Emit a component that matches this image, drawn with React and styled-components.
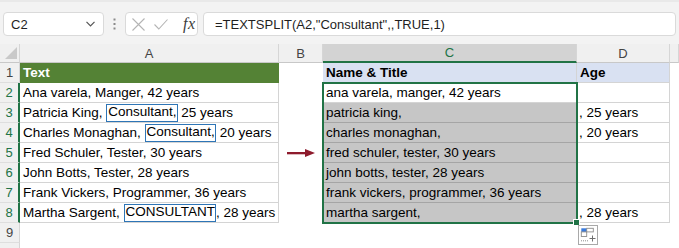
import React from 'react';
import styled, { createGlobalStyle } from 'styled-components';

const GlobalStyle = createGlobalStyle`
  html, body {
    margin: 0;
    padding: 0;
    width: 679px;
    height: 248px;
    overflow: hidden;
    background: #ffffff;
    font-family: 'Liberation Sans', Arial, sans-serif;
  }
`;

const GREEN = '#217346';

const Toolbar = styled.div`
  display: flex;
  align-items: center;
  height: 44px;
  box-sizing: border-box;
  padding: 10px 3px 8px 3px;
  background: #f3f3f3;
  border-top: 2px solid #e9e9e9;
`;

const Box = styled.div`
  display: flex;
  align-items: center;
  height: 24px;
  box-sizing: border-box;
  background: #ffffff;
  border: 1px solid #dadada;
  border-radius: 4px;
  font-size: 13px;
  color: #1f1f1f;
`;

const NameBox = styled(Box)`
  width: 101px;
  justify-content: space-between;
  padding: 0 8px 0 7px;
`;

const Grip = styled.div`
  width: 21px;
  display: flex;
  justify-content: center;
`;

const ButtonGroup = styled(Box)`
  width: 73px;
  padding-left: 6px;
  gap: 9px;
`;

const Fx = styled.span`
  margin-left: 6px;
  font-family: 'Liberation Serif', 'Times New Roman', serif;
  font-style: italic;
  font-size: 16px;
  color: #3c3c3c;
  letter-spacing: 0.5px;
`;

const FormulaBox = styled(Box)`
  flex: 1;
  margin-left: 5px;
  padding-left: 11px;
  white-space: pre;
`;

const Sheet = styled.div`
  position: relative;
  display: grid;
  grid-template-columns: 20px 259px 44px 254px 93px 9px;
  grid-template-rows: 19px repeat(10, 20px);
`;

const Corner = styled.div`
  background: #f0f0f0;
  border-right: 1px solid #d6d6d6;
  border-bottom: 1px solid #c8c8c8;
  display: flex;
  align-items: flex-end;
  justify-content: flex-end;
  padding: 0 2px 3px 0;
`;

const ColHead = styled.div`
  display: flex;
  align-items: center;
  justify-content: center;
  box-sizing: border-box;
  font-size: 13px;
  background: ${(p) => (p.$sel ? '#d3d3d3' : '#f0f0f0')};
  color: ${(p) => (p.$sel ? GREEN : '#444444')};
  border-right: 1px solid #d6d6d6;
  border-bottom: ${(p) => (p.$sel ? `2px solid ${GREEN}` : '1px solid #c8c8c8')};
`;

const RowHead = styled.div`
  display: flex;
  align-items: center;
  justify-content: center;
  box-sizing: border-box;
  font-size: 13px;
  background: #f0f0f0;
  color: ${(p) => (p.$sel ? GREEN : '#444444')};
  border-bottom: 1px solid #dedede;
  border-right: ${(p) => (p.$sel ? `2px solid ${GREEN}` : '1px solid #d6d6d6')};
`;

const Cell = styled.div`
  display: flex;
  align-items: flex-end;
  box-sizing: border-box;
  padding: 0 0 1px ${(p) => p.$pad ?? 3}px;
  font-size: 13.5px;
  line-height: 16px;
  white-space: pre;
  overflow: hidden;
  background: ${(p) => p.$fill || '#ffffff'};
  color: ${(p) => p.$color || '#000000'};
  font-weight: ${(p) => (p.$bold ? 700 : 400)};
  border-right: ${(p) => (p.$line ? `1px solid ${p.$line}` : 'none')};
  border-bottom: ${(p) => (p.$line ? `1px solid ${p.$line}` : 'none')};
`;

const ArrowCell = styled(Cell)`
  align-items: center;
  justify-content: center;
  padding: 0;
`;

const Marked = styled.span`
  display: inline-flex;
  align-items: flex-end;
  align-self: stretch;
  margin-top: 1px;
  margin-bottom: -1px;
  padding: 0 0 1px 1px;
  border: 1px solid #2e75b6;
  box-sizing: border-box;
`;

const Selection = styled.div`
  position: absolute;
  left: 322px;
  top: 38px;
  width: 256px;
  height: 142px;
  box-sizing: border-box;
  border: 2px solid ${GREEN};
  pointer-events: none;
`;

const FillHandle = styled.div`
  position: absolute;
  left: 573px;
  top: 175px;
  width: 7px;
  height: 7px;
  box-sizing: border-box;
  background: ${GREEN};
  border: 1px solid #ffffff;
`;

const QuickAnalysis = styled.div`
  position: absolute;
  left: 578px;
  top: 181px;
  width: 20px;
  height: 20px;
  box-sizing: border-box;
  background: #ffffff;
  border: 1px solid #a9a9a9;
  display: flex;
`;

const rows = [
  { a: ['Ana varela, Manger, 42 years'], c: 'ana varela, manger, 42 years', d: '' },
  { a: ['Patricia King, ', 'Consultant,', ' 25 years'], c: 'patricia king,', d: ', 25 years' },
  { a: ['Charles Monaghan, ', 'Consultant,', ' 20 years'], c: 'charles monaghan,', d: ', 20 years' },
  { a: ['Fred Schuler, Tester, 30 years'], c: 'fred schuler, tester, 30 years', d: '' },
  { a: ['John Botts, Tester, 28 years'], c: 'john botts, tester, 28 years', d: '' },
  { a: ['Frank Vickers, Programmer, 36 years'], c: 'frank vickers, programmer, 36 years', d: '' },
  { a: ['Martha Sargent, ', 'CONSULTANT', ', 28 years'], c: 'martha sargent,', d: ', 28 years' },
];

const LINE = '#d4d4d4';

function Chevron() {
  return (
    <svg width="9" height="6" viewBox="0 0 9 6">
      <path d="M0.5 0.8 L4.5 4.8 L8.5 0.8" fill="none" stroke="#555" strokeWidth="1.2" />
    </svg>
  );
}

function Dots() {
  return (
    <svg width="3" height="12" viewBox="0 0 3 12">
      <rect x="0.5" y="0.5" width="2" height="2" fill="#8a8a8a" />
      <rect x="0.5" y="5" width="2" height="2" fill="#8a8a8a" />
      <rect x="0.5" y="9.5" width="2" height="2" fill="#8a8a8a" />
    </svg>
  );
}

function Cross() {
  return (
    <svg width="13" height="13" viewBox="0 0 13 13">
      <path d="M0.5 0.5 L12.5 12.5 M12.5 0.5 L0.5 12.5" stroke="#b4b4b4" strokeWidth="1.1" fill="none" />
    </svg>
  );
}

function Check() {
  return (
    <svg width="14" height="11" viewBox="0 0 14 11">
      <path d="M0.5 5.5 L4.8 10 L13.5 0.5" stroke="#b4b4b4" strokeWidth="1.1" fill="none" />
    </svg>
  );
}

function CornerMark() {
  return (
    <svg width="12" height="12" viewBox="0 0 12 12">
      <path d="M12 0 L12 12 L0 12 Z" fill="#c9c9c9" />
    </svg>
  );
}

function RedArrow() {
  return (
    <svg width="28" height="8" viewBox="0 0 28 8">
      <rect x="0" y="3" width="20" height="2.3" fill="#8e1b2d" />
      <path d="M18 0 L28 4.1 L18 8 Z" fill="#8e1b2d" />
    </svg>
  );
}

function QuickIcon() {
  return (
    <svg width="18" height="18" viewBox="0 0 18 18">
      <rect x="2.3" y="2.3" width="5.4" height="3.6" fill="#3b7bdc" />
      <rect x="7.7" y="2.3" width="6.6" height="3.6" fill="none" stroke="#8c8c8c" strokeWidth="0.9" />
      <rect x="2.3" y="5.9" width="5.4" height="4.6" fill="none" stroke="#8c8c8c" strokeWidth="0.9" />
      <path d="M2 14.8 H10" stroke="#8c8c8c" strokeWidth="1" strokeDasharray="1 1" />
      <path d="M13.5 9.5 V15.5 M10.5 12.5 H16.5" stroke="#6f6f6f" strokeWidth="1" />
    </svg>
  );
}

export default function App() {
  return (
    <>
      <GlobalStyle />
      <Toolbar>
        <NameBox>
          <span>C2</span>
          <Chevron />
        </NameBox>
        <Grip>
          <Dots />
        </Grip>
        <ButtonGroup>
          <Cross />
          <Check />
          <Fx>fx</Fx>
        </ButtonGroup>
        <FormulaBox>=TEXTSPLIT(A2,"Consultant",,TRUE,1)</FormulaBox>
      </Toolbar>
      <Sheet>
        <Corner>
          <CornerMark />
        </Corner>
        <ColHead>A</ColHead>
        <ColHead>B</ColHead>
        <ColHead $sel>C</ColHead>
        <ColHead>D</ColHead>
        <ColHead />

        <RowHead>1</RowHead>
        <Cell $fill="#548235" $color="#ffffff" $bold $line="#548235">Text</Cell>
        <Cell />
        <Cell $fill="#d9e1f2" $bold $line={LINE}>Name &amp; Title</Cell>
        <Cell $fill="#d9e1f2" $bold $line={LINE}>Age</Cell>
        <Cell />

        {rows.map((r, i) => {
          const shaded = i > 0;
          return (
            <React.Fragment key={i}>
              <RowHead $sel>{i + 2}</RowHead>
              <Cell $line={LINE}>
                {r.a.length === 1 ? (
                  r.a[0]
                ) : (
                  <>
                    {r.a[0]}
                    <Marked>{r.a[1]}</Marked>
                    {r.a[2]}
                  </>
                )}
              </Cell>
              {i === 3 ? (
                <ArrowCell>
                  <RedArrow />
                </ArrowCell>
              ) : (
                <Cell />
              )}
              <Cell $fill={shaded ? '#c6c6c6' : '#ffffff'} $line={shaded ? '#a5a5a5' : LINE}>
                {r.c}
              </Cell>
              <Cell $line={LINE} $pad={2}>{r.d}</Cell>
              <Cell />
            </React.Fragment>
          );
        })}

        <RowHead>9</RowHead>
        <Cell />
        <Cell />
        <Cell />
        <Cell />
        <Cell />
        <RowHead />
        <Cell />
        <Cell />
        <Cell />
        <Cell />
        <Cell />

        <Selection />
        <FillHandle />
        <QuickAnalysis>
          <QuickIcon />
        </QuickAnalysis>
      </Sheet>
    </>
  );
}
